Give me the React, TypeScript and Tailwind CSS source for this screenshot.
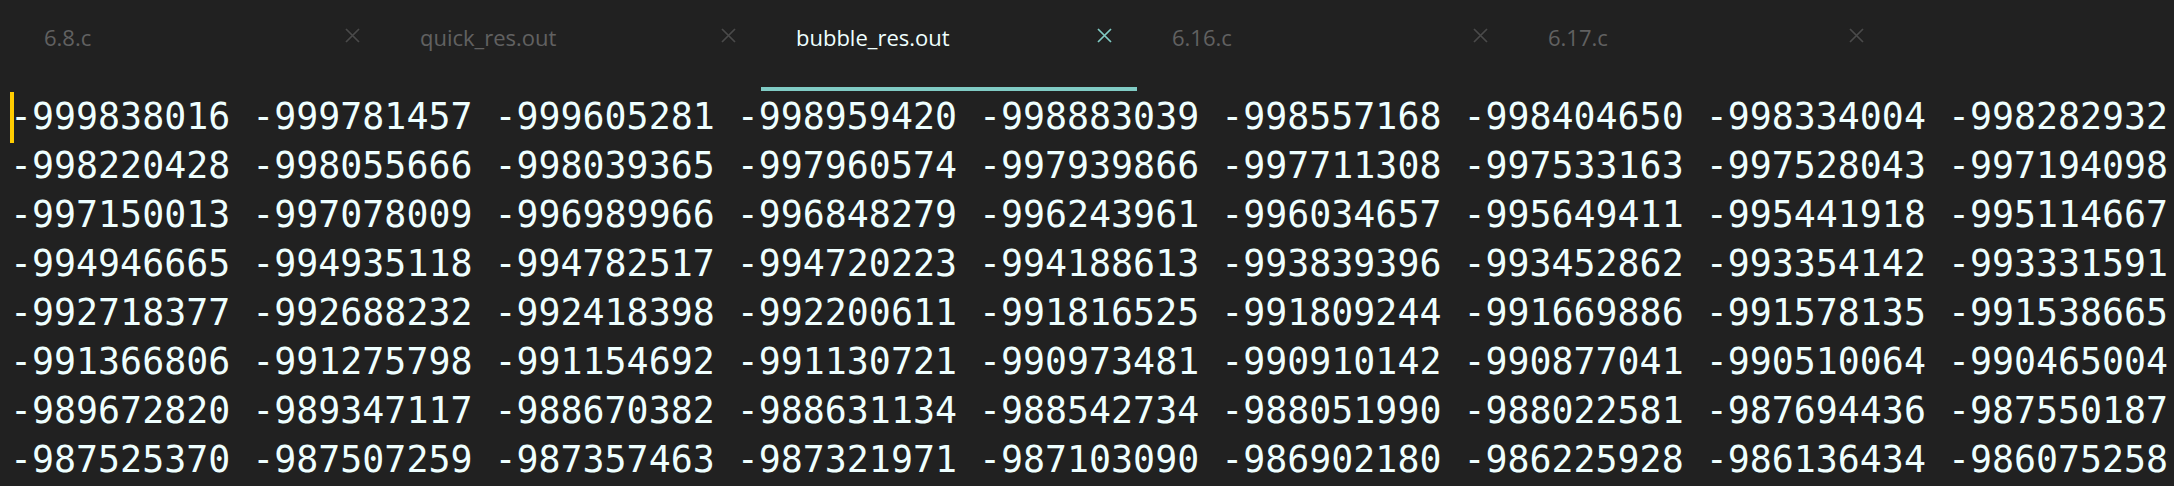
const tabs = [
  { name: '6.8.c', active: false },
  { name: 'quick_res.out', active: false },
  { name: 'bubble_res.out', active: true },
  { name: '6.16.c', active: false },
  { name: '6.17.c', active: false },
];

const rows = [
  '-999838016 -999781457 -999605281 -998959420 -998883039 -998557168 -998404650 -998334004 -998282932',
  '-998220428 -998055666 -998039365 -997960574 -997939866 -997711308 -997533163 -997528043 -997194098',
  '-997150013 -997078009 -996989966 -996848279 -996243961 -996034657 -995649411 -995441918 -995114667',
  '-994946665 -994935118 -994782517 -994720223 -994188613 -993839396 -993452862 -993354142 -993331591',
  '-992718377 -992688232 -992418398 -992200611 -991816525 -991809244 -991669886 -991578135 -991538665',
  '-991366806 -991275798 -991154692 -991130721 -990973481 -990910142 -990877041 -990510064 -990465004',
  '-989672820 -989347117 -988670382 -988631134 -988542734 -988051990 -988022581 -987694436 -987550187',
  '-987525370 -987507259 -987357463 -987321971 -987103090 -986902180 -986225928 -986136434 -986075258',
];

function CloseIcon({ active }: { active: boolean }) {
  return (
    <svg width="15" height="15" viewBox="0 0 15 15" className={active ? 'text-[#80cbc4]' : 'text-[#4a4a4a]'}>
      <path d="M1 1 L14 14 M14 1 L1 14" stroke="currentColor" strokeWidth="1.7" fill="none" />
    </svg>
  );
}

function Tab({ name, active }: { name: string; active: boolean }) {
  return (
    <div className="flex h-[92px] w-[376px] shrink-0 flex-col">
      <div className="flex h-[87px] items-start">
        <span
          className={`w-[336px] pl-[35px] pt-[22px] text-[22px] leading-[30px] font-['Open_Sans',sans-serif] ${
            active ? 'text-[#eeffff]' : 'text-[#616161]'
          }`}
        >
          {name}
        </span>
        <div className="pt-[28px]">
          <CloseIcon active={active} />
        </div>
      </div>
      <div className={`h-[4px] ${active ? 'bg-[#80cbc4]' : 'bg-transparent'}`} />
    </div>
  );
}

export default function App() {
  return (
    <div className="h-[486px] w-[2174px] overflow-hidden bg-[#212121]">
      <div className="flex pl-[9px]">
        {tabs.map((t) => (
          <Tab key={t.name} name={t.name} active={t.active} />
        ))}
      </div>
      <div className="pl-[10px] font-['DejaVu_Sans_Mono',monospace] text-[36.6px] leading-[49px] text-[#eeffff]">
        {rows.map((row, i) => (
          <div key={i} className="relative whitespace-pre">
            {i === 0 && <span className="absolute left-0 top-0 h-[51px] w-[4px] bg-[#ffcc00]" />}
            {row}
          </div>
        ))}
      </div>
    </div>
  );
}
